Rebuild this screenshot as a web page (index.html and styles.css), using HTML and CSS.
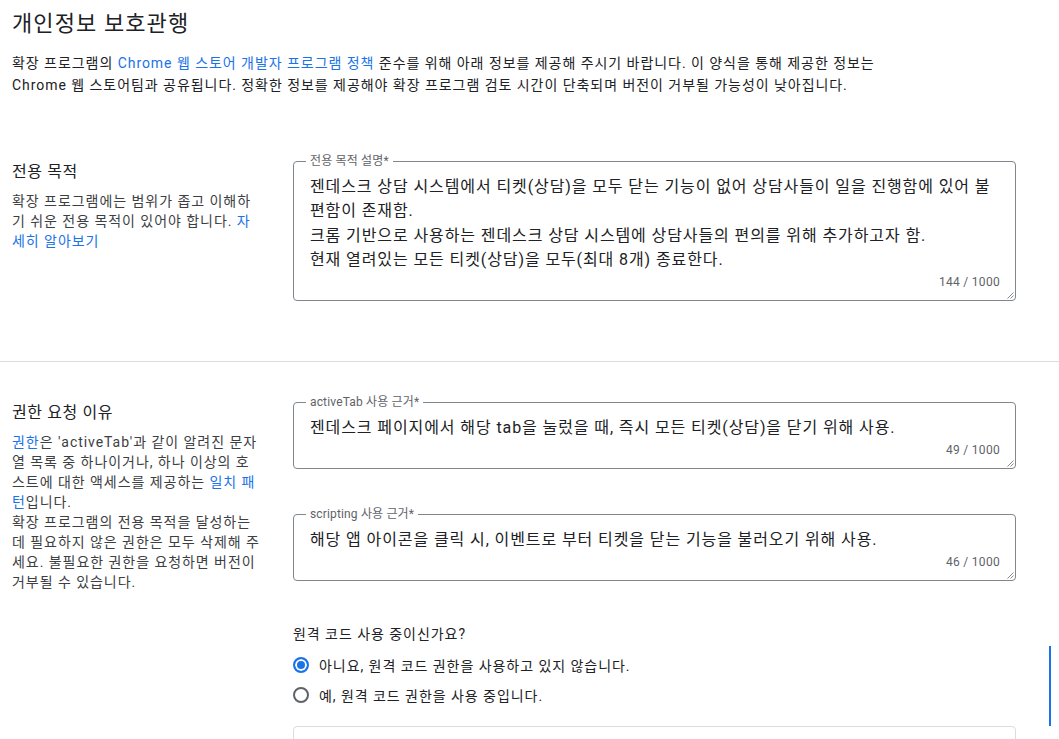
FILE: index.html
```html
<!DOCTYPE html>
<html lang="ko">
<head>
<meta charset="utf-8">
<title>개인정보 보호관행</title>
<link rel="stylesheet" href="styles.css">
</head>
<body>
<main class="page">
  <header class="header">
    <h1 class="title">개인정보 보호관행</h1>
    <p class="intro">확장 프로그램의 <a class="link" href="#">Chrome 웹 스토어 개발자 프로그램 정책</a> 준수를 위해 아래 정보를 제공해 주시기 바랍니다. 이 양식을 통해 제공한 정보는 Chrome 웹 스토어팀과 공유됩니다. 정확한 정보를 제공해야 확장 프로그램 검토 시간이 단축되며 버전이 거부될 가능성이 낮아집니다.</p>
  </header>

  <section class="section section-bordered">
    <div class="info">
      <h2 class="info-title">전용 목적</h2>
      <p class="info-text">확장 프로그램에는 범위가 좁고 이해하기 쉬운 전용 목적이 있어야 합니다. <a class="link" href="#">자세히 알아보기</a></p>
    </div>
    <div class="fields">
      <div class="field">
        <label class="field-label" for="purpose">전용 목적 설명*</label>
        <textarea id="purpose" class="field-input rows-4" spellcheck="false">젠데스크 상담 시스템에서 티켓(상담)을 모두 닫는 기능이 없어 상담사들이 일을 진행함에 있어 불편함이 존재함.
크롬 기반으로 사용하는 젠데스크 상담 시스템에 상담사들의 편의를 위해 추가하고자 함.
현재 열려있는 모든 티켓(상담)을 모두(최대 8개) 종료한다.</textarea>
        <div class="field-counter">144 / 1000</div>
        <svg class="grip" width="8" height="8" viewBox="0 0 8 8"><path d="M7.5 1.5 L1.5 7.5 M7.5 4.5 L4.5 7.5" stroke="#80868b" stroke-width="1" fill="none"/></svg>
      </div>
    </div>
  </section>

  <section class="section">
    <div class="info">
      <h2 class="info-title">권한 요청 이유</h2>
      <p class="info-text"><a class="link" href="#">권한</a>은 'activeTab'과 같이 알려진 문자열 목록 중 하나이거나, 하나 이상의 호스트에 대한 액세스를 제공하는 <a class="link" href="#">일치 패턴</a>입니다.</p>
      <p class="info-text">확장 프로그램의 전용 목적을 달성하는 데 필요하지 않은 권한은 모두 삭제해 주세요. 불필요한 권한을 요청하면 버전이 거부될 수 있습니다.</p>
    </div>
    <div class="fields">
      <div class="field">
        <label class="field-label" for="activetab">activeTab 사용 근거*</label>
        <textarea id="activetab" class="field-input rows-1" spellcheck="false">젠데스크 페이지에서 해당 tab을 눌렀을 때, 즉시 모든 티켓(상담)을 닫기 위해 사용.</textarea>
        <div class="field-counter">49 / 1000</div>
        <svg class="grip" width="8" height="8" viewBox="0 0 8 8"><path d="M7.5 1.5 L1.5 7.5 M7.5 4.5 L4.5 7.5" stroke="#80868b" stroke-width="1" fill="none"/></svg>
      </div>
      <div class="field">
        <label class="field-label" for="scripting">scripting 사용 근거*</label>
        <textarea id="scripting" class="field-input rows-1" spellcheck="false">해당 앱 아이콘을 클릭 시, 이벤트로 부터 티켓을 닫는 기능을 불러오기 위해 사용.</textarea>
        <div class="field-counter">46 / 1000</div>
        <svg class="grip" width="8" height="8" viewBox="0 0 8 8"><path d="M7.5 1.5 L1.5 7.5 M7.5 4.5 L4.5 7.5" stroke="#80868b" stroke-width="1" fill="none"/></svg>
      </div>

      <fieldset class="question">
        <legend class="question-title">원격 코드 사용 중이신가요?</legend>
        <label class="radio-row"><input class="radio" type="radio" name="remote" checked><span>아니요, 원격 코드 권한을 사용하고 있지 않습니다.</span></label>
        <label class="radio-row"><input class="radio" type="radio" name="remote"><span>예, 원격 코드 권한을 사용 중입니다.</span></label>
      </fieldset>

      <div class="next-box"></div>
    </div>
  </section>
</main>
<div class="scroll-marker"></div>
</body>
</html>
```

FILE: styles.css
```css
html, body {
  margin: 0;
  padding: 0;
  background: #ffffff;
  overflow: hidden;
}

body {
  font-family: Roboto, "Noto Sans CJK KR", sans-serif;
  color: #202124;
}

.page {
  width: 100%;
}

.header {
  padding: 10px 12px 0;
}

.title {
  margin: 0;
  font-size: 22px;
  line-height: 28px;
  font-weight: 400;
  letter-spacing: 1.1px;
  color: #202124;
}

.intro {
  margin: 14px 0 25px;
  max-width: 880px;
  font-size: 14px;
  line-height: 22px;
  letter-spacing: 0.95px;
  color: #202124;
}

.link {
  color: #1a73e8;
  text-decoration: none;
}

.section {
  display: grid;
  grid-template-columns: 249.5px 723px;
  column-gap: 31.5px;
  align-items: start;
  padding: 40px 12px 60px;
}

.section-bordered {
  border-bottom: 1px solid #dadce0;
}

.info-title {
  margin: 0 0 8px;
  font-size: 16px;
  line-height: 22px;
  font-weight: 400;
  letter-spacing: 0.6px;
  color: #202124;
}

.info-text {
  margin: 0;
  font-size: 14px;
  line-height: 20px;
  letter-spacing: 0.95px;
  color: #3c4043;
}

.fields {
  display: flex;
  flex-direction: column;
  gap: 45px;
}

.field {
  position: relative;
  border: 1px solid #80868b;
  border-radius: 4px;
  padding: 13px 0 10px 16px;
}

.field-label {
  position: absolute;
  top: -8px;
  left: 12px;
  padding: 0 4px;
  background: #ffffff;
  font-size: 12px;
  line-height: 14px;
  letter-spacing: 0.15px;
  color: #5f6368;
}

.field-input {
  display: block;
  box-sizing: border-box;
  width: 100%;
  margin: 0;
  padding: 0 20px 0 0;
  border: 0;
  outline: none;
  resize: none;
  overflow: hidden;
  background: transparent;
  font-family: Roboto, "Noto Sans CJK KR", sans-serif;
  font-size: 16px;
  line-height: 24.3px;
  letter-spacing: 0.9px;
  color: #202124;
}

.rows-4 {
  height: 97px;
}

.rows-1 {
  height: 24px;
}

.field-counter {
  margin-top: 2px;
  padding-right: 15px;
  text-align: right;
  font-size: 12px;
  line-height: 16px;
  letter-spacing: 0.3px;
  color: #5f6368;
}

.grip {
  position: absolute;
  right: 1px;
  bottom: 1px;
}

.question {
  margin: -2px 0 0;
  padding: 0;
  border: 0;
  display: flex;
  flex-direction: column;
}

.question-title {
  padding: 0;
  margin-bottom: 6px;
  font-size: 14px;
  line-height: 20px;
  letter-spacing: 0.95px;
  color: #202124;
}

.radio-row {
  display: flex;
  align-items: center;
  gap: 10px;
  height: 30px;
  font-size: 14px;
  letter-spacing: 0.95px;
  color: #202124;
}

.radio {
  appearance: none;
  -webkit-appearance: none;
  box-sizing: border-box;
  width: 16px;
  height: 16px;
  margin: 0;
  border: 2px solid #5f6368;
  border-radius: 50%;
  background: #ffffff;
}

.radio:checked {
  border-color: #1a73e8;
  background: #1a73e8;
  box-shadow: inset 0 0 0 2px #ffffff;
}

.next-box {
  margin-top: -29px;
  height: 60px;
  border: 1px solid #dadce0;
  border-radius: 4px;
}

.scroll-marker {
  position: absolute;
  top: 646px;
  right: 8px;
  width: 2px;
  height: 80px;
  background: #1a73e8;
}
```
